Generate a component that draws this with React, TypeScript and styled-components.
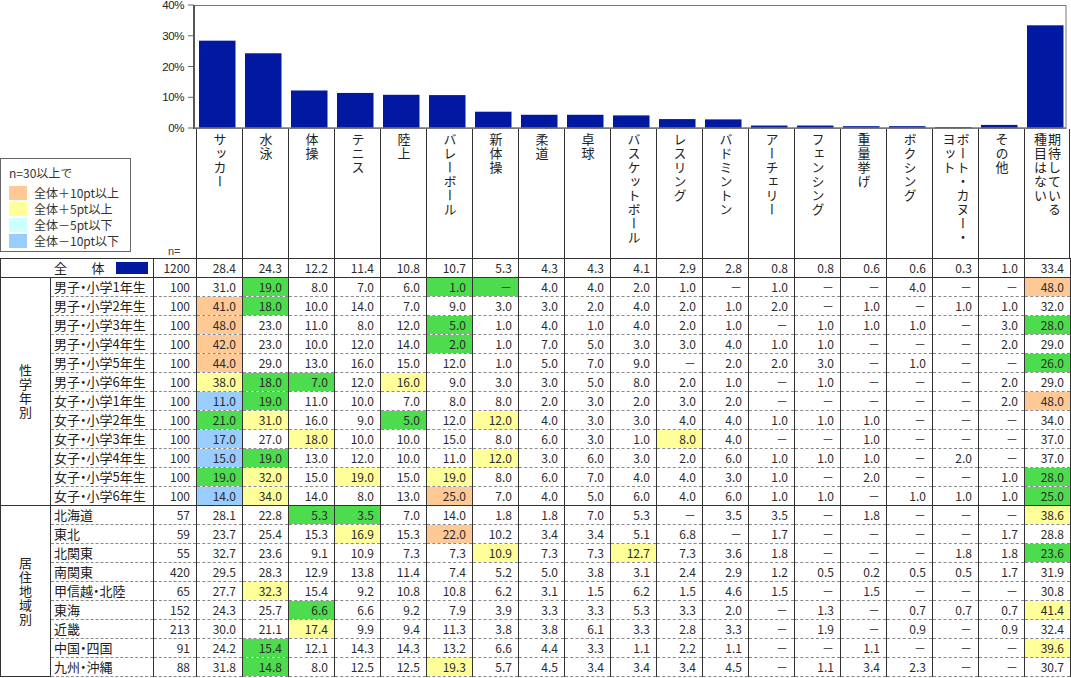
import React from "react";
import styled, { createGlobalStyle } from "styled-components";

const GlobalStyle = createGlobalStyle`
  html, body {
    margin: 0;
    padding: 0;
    background: #fff;
  }
  body {
    font-family: "Noto Sans CJK JP", "Noto Sans", sans-serif;
    color: #2b2b2b;
  }
`;

const COL = 46;
const BAR_COLOR = "#0019a0";

const sports = [
  "サッカー",
  "水泳",
  "体操",
  "テニス",
  "陸上",
  "バレーボール",
  "新体操",
  "柔道",
  "卓球",
  "バスケットボール",
  "レスリング",
  "バドミントン",
  "アーチェリー",
  "フェンシング",
  "重量挙げ",
  "ボクシング",
  "ボート・カヌー・\nヨット",
  "その他",
  "期待している\n種目はない",
];

const total =
  "1200 28.4 24.3 12.2 11.4 10.8 10.7 5.3 4.3 4.3 4.1 2.9 2.8 0.8 0.8 0.6 0.6 0.3 1.0 33.4";

const groups: { title: string; rows: [string, string][] }[] = [
  {
    title: "性学年別",
    rows: [
      ["男子・小学1年生", "100 31.0 19.0g 8.0 7.0 6.0 1.0g -g 4.0 4.0 2.0 1.0 - 1.0 - - 4.0 - - 48.0o"],
      ["男子・小学2年生", "100 41.0o 18.0g 10.0 14.0 7.0 9.0 3.0 3.0 2.0 4.0 2.0 1.0 2.0 - 1.0 - 1.0 1.0 32.0"],
      ["男子・小学3年生", "100 48.0o 23.0 11.0 8.0 12.0 5.0g 1.0 4.0 1.0 4.0 2.0 1.0 - 1.0 1.0 1.0 - 3.0 28.0g"],
      ["男子・小学4年生", "100 42.0o 23.0 10.0 12.0 14.0 2.0g 1.0 7.0 5.0 3.0 3.0 4.0 1.0 1.0 - - - 2.0 29.0"],
      ["男子・小学5年生", "100 44.0o 29.0 13.0 16.0 15.0 12.0 1.0 5.0 7.0 9.0 - 2.0 2.0 3.0 - 1.0 - - 26.0g"],
      ["男子・小学6年生", "100 38.0y 18.0g 7.0g 12.0 16.0y 9.0 3.0 3.0 5.0 8.0 2.0 1.0 - 1.0 - - - 2.0 29.0"],
      ["女子・小学1年生", "100 11.0b 19.0g 11.0 10.0 7.0 8.0 8.0 2.0 3.0 2.0 3.0 2.0 - - - - - 2.0 48.0o"],
      ["女子・小学2年生", "100 21.0g 31.0y 16.0 9.0 5.0g 12.0 12.0y 4.0 3.0 3.0 4.0 4.0 1.0 1.0 1.0 - - - 34.0"],
      ["女子・小学3年生", "100 17.0b 27.0 18.0y 10.0 10.0 15.0 8.0 6.0 3.0 1.0 8.0y 4.0 - - 1.0 - - - 37.0"],
      ["女子・小学4年生", "100 15.0b 19.0g 13.0 12.0 10.0 11.0 12.0y 3.0 6.0 3.0 2.0 6.0 1.0 1.0 1.0 - 2.0 - 37.0"],
      ["女子・小学5年生", "100 19.0g 32.0y 15.0 19.0y 15.0 19.0y 8.0 6.0 7.0 4.0 4.0 3.0 1.0 - 2.0 - - 1.0 28.0g"],
      ["女子・小学6年生", "100 14.0b 34.0y 14.0 8.0 13.0 25.0o 7.0 4.0 5.0 6.0 4.0 6.0 1.0 1.0 - 1.0 1.0 1.0 25.0g"],
    ],
  },
  {
    title: "居住地域別",
    rows: [
      ["北海道", "57 28.1 22.8 5.3g 3.5g 7.0 14.0 1.8 1.8 7.0 5.3 - 3.5 3.5 - 1.8 - - - 38.6y"],
      ["東北", "59 23.7 25.4 15.3 16.9y 15.3 22.0o 10.2 3.4 3.4 5.1 6.8 - 1.7 - - - - 1.7 28.8"],
      ["北関東", "55 32.7 23.6 9.1 10.9 7.3 7.3 10.9y 7.3 7.3 12.7y 7.3 3.6 1.8 - - - 1.8 1.8 23.6g"],
      ["南関東", "420 29.5 28.3 12.9 13.8 11.4 7.4 5.2 5.0 3.8 3.1 2.4 2.9 1.2 0.5 0.2 0.5 0.5 1.7 31.9"],
      ["甲信越・北陸", "65 27.7 32.3y 15.4 9.2 10.8 10.8 6.2 3.1 1.5 6.2 1.5 4.6 1.5 - 1.5 - - - 30.8"],
      ["東海", "152 24.3 25.7 6.6g 6.6 9.2 7.9 3.9 3.3 3.3 5.3 3.3 2.0 - 1.3 - 0.7 0.7 0.7 41.4y"],
      ["近畿", "213 30.0 21.1 17.4y 9.9 9.4 11.3 3.8 3.8 6.1 3.3 2.8 3.3 - 1.9 - 0.9 - 0.9 32.4"],
      ["中国・四国", "91 24.2 15.4g 12.1 14.3 14.3 13.2 6.6 4.4 3.3 1.1 2.2 1.1 - - 1.1 - - - 39.6y"],
      ["九州・沖縄", "88 31.8 14.8g 8.0 12.5 12.5 19.3y 5.7 4.5 3.4 3.4 3.4 4.5 - 1.1 3.4 2.3 - - 30.7"],
    ],
  },
];

const tones: Record<string, string> = {
  o: "#ffc996",
  y: "#ffff99",
  g: "#4ddc4d",
  b: "#99ccff",
  c: "#ccffff",
};

type Cell = { text: string; tone?: string };

const parse = (line: string): Cell[] =>
  line.split(" ").map((tok) => {
    const last = tok.slice(-1);
    const tone = tones[last] ? last : undefined;
    const raw = tone ? tok.slice(0, -1) : tok;
    return { text: raw === "-" ? "－" : raw, tone };
  });

const totalCells = parse(total);
const chartValues = totalCells.slice(1).map((c) => parseFloat(c.text));

// ---------- chart ----------

const ChartSvg = styled.svg`
  display: block;
  font-family: "Liberation Sans", Arial, sans-serif;
`;

const PLOT_X = 194;
const PLOT_TOP = 5;
const PLOT_BOTTOM = 128;
const PLOT_W = 19 * COL;
const CHART_H = 134;

const Chart = () => {
  const scale = (PLOT_BOTTOM - PLOT_TOP) / 40;
  return (
    <ChartSvg width={1071} height={CHART_H}>
      <rect
        x={PLOT_X}
        y={PLOT_TOP + 0.5}
        width={PLOT_W - 2}
        height={PLOT_BOTTOM - PLOT_TOP}
        fill="#fff"
        stroke="#7a7a7a"
        strokeWidth={1}
      />
      {[0, 10, 20, 30, 40].map((t) => {
        const y = PLOT_BOTTOM - t * scale;
        return (
          <g key={t}>
            <line x1={188} x2={PLOT_X} y1={y} y2={y} stroke="#666" strokeWidth={1} />
            <text
              x={184}
              y={y + 4}
              textAnchor="end"
              fontSize={11.5}
              fill="#222"
              letterSpacing={-0.4}
            >
              {t}%
            </text>
          </g>
        );
      })}
      {chartValues.map((v, i) => {
        const h = v * scale;
        return (
          <rect
            key={i}
            x={PLOT_X + i * COL + 5}
            y={PLOT_BOTTOM - h}
            width={36.5}
            height={h}
            fill={BAR_COLOR}
          />
        );
      })}
      <line x1={PLOT_X} x2={PLOT_X} y1={PLOT_TOP} y2={PLOT_BOTTOM + 1} stroke="#555" strokeWidth={2} />
      <line x1={PLOT_X} x2={PLOT_X + PLOT_W - 2} y1={PLOT_BOTTOM} y2={PLOT_BOTTOM} stroke="#777" strokeWidth={1.5} />
    </ChartSvg>
  );
};

// ---------- header ----------

const HeaderRow = styled.div`
  display: grid;
  grid-template-columns: 153px 43px repeat(19, ${COL}px);
  height: 129px;
  margin-top: ${129 - CHART_H}px;
`;

const LegendCell = styled.div`
  display: flex;
  align-items: flex-end;
  padding-bottom: 6px;
`;

const Legend = styled.div`
  box-sizing: border-box;
  width: 131px;
  height: 94px;
  border: 1px solid #666;
  padding: 6px 0 0 8px;
  font-size: 12px;
  line-height: 16px;
  color: #333;
`;

const LegendTitle = styled.div`
  margin-bottom: 4px;
`;

const LegendItem = styled.div`
  display: flex;
  align-items: center;
  gap: 7px;
  height: 16px;
`;

const Swatch = styled.span<{ $color: string }>`
  display: inline-block;
  width: 18px;
  height: 14px;
  background: ${(p) => p.$color};
`;

const NLabel = styled.div`
  display: flex;
  align-items: flex-end;
  padding: 0 0 1px 15px;
  font-family: "Liberation Sans", Arial, sans-serif;
  font-size: 11px;
  color: #444;
`;

const HeadCell = styled.div<{ $last?: boolean }>`
  display: flex;
  justify-content: center;
  border-left: 1px solid #333;
  border-right: ${(p) => (p.$last ? "1px solid #333" : "none")};
  padding-top: 4px;
`;

const HeadText = styled.span`
  writing-mode: vertical-rl;
  white-space: pre;
  font-size: 13px;
  letter-spacing: 1px;
  line-height: 14px;
  color: #222;
`;

// ---------- table ----------

const Table = styled.table`
  border-collapse: collapse;
  table-layout: fixed;
  width: 1070px;
`;

const Row = styled.tr`
  height: 19px;
`;

const Td = styled.td<{ $first?: boolean; $tone?: string }>`
  padding: 0;
  height: 18px;
  border-left: 1px solid #333;
  border-right: 1px solid #333;
  border-top: ${(p) => (p.$first ? "1px solid #333" : "1px dashed #8a8a8a")};
  border-bottom: 1px dashed #8a8a8a;
  background: ${(p) => (p.$tone ? tones[p.$tone] : "transparent")};
  line-height: 18px;
  white-space: nowrap;
  overflow: hidden;
`;

const NumCell = styled(Td)`
  text-align: right;
  padding-right: 6px;
  font-size: 12px;
  color: #2b2b2b;
`;

const LabelCell = styled(Td)`
  padding-left: 3px;
  font-size: 13px;
  font-feature-settings: "palt";
  color: #222;
`;

const GroupCell = styled.td`
  padding: 0;
  border: 1px solid #333;
  text-align: center;
  vertical-align: middle;
`;

const GroupText = styled.span`
  display: inline-block;
  writing-mode: vertical-rl;
  font-size: 13px;
  letter-spacing: 1px;
  color: #222;
  margin-top: 6px;
`;

const TotalLabel = styled(Td)`
  border-top: 1px solid #333;
  border-bottom: 1px solid #333;
`;

const TotalInner = styled.div`
  display: flex;
  align-items: center;
  gap: 12px;
  padding-left: 53px;
  font-size: 13px;
  letter-spacing: -0.5px;
  color: #222;
`;

const TotalSwatch = styled.span`
  display: inline-block;
  width: 32px;
  height: 12px;
  background: ${BAR_COLOR};
`;

const TotalNum = styled(NumCell)`
  border-top: 1px solid #333;
  border-bottom: 1px solid #333;
`;

const Cols = () => (
  <colgroup>
    <col style={{ width: 50 }} />
    <col style={{ width: 103 }} />
    <col style={{ width: 43 }} />
    {sports.map((s) => (
      <col key={s} style={{ width: COL }} />
    ))}
  </colgroup>
);

export default function App() {
  return (
    <>
      <GlobalStyle />
      <Chart />
      <HeaderRow>
        <LegendCell>
          <Legend>
            <LegendTitle>n=30以上で</LegendTitle>
            <LegendItem>
              <Swatch $color={tones.o} />
              全体＋10pt以上
            </LegendItem>
            <LegendItem>
              <Swatch $color={tones.y} />
              全体＋5pt以上
            </LegendItem>
            <LegendItem>
              <Swatch $color={tones.c} />
              全体－5pt以下
            </LegendItem>
            <LegendItem>
              <Swatch $color={tones.b} />
              全体－10pt以下
            </LegendItem>
          </Legend>
        </LegendCell>
        <NLabel>n=</NLabel>
        {sports.map((s, i) => (
          <HeadCell key={s} $last={i === sports.length - 1}>
            <HeadText>{s}</HeadText>
          </HeadCell>
        ))}
      </HeaderRow>
      <Table>
        <Cols />
        <tbody>
          <Row>
            <TotalLabel colSpan={2}>
              <TotalInner>
                全　　体
                <TotalSwatch />
              </TotalInner>
            </TotalLabel>
            {totalCells.map((c, i) => (
              <TotalNum key={i}>{c.text}</TotalNum>
            ))}
          </Row>
          {groups.map((g) =>
            g.rows.map(([label, line], r) => (
              <Row key={g.title + label}>
                {r === 0 && (
                  <GroupCell rowSpan={g.rows.length}>
                    <GroupText>{g.title}</GroupText>
                  </GroupCell>
                )}
                <LabelCell $first={r === 0}>{label}</LabelCell>
                {parse(line).map((c, i) => (
                  <NumCell key={i} $first={r === 0} $tone={c.tone}>
                    {c.text}
                  </NumCell>
                ))}
              </Row>
            ))
          )}
        </tbody>
      </Table>
    </>
  );
}
